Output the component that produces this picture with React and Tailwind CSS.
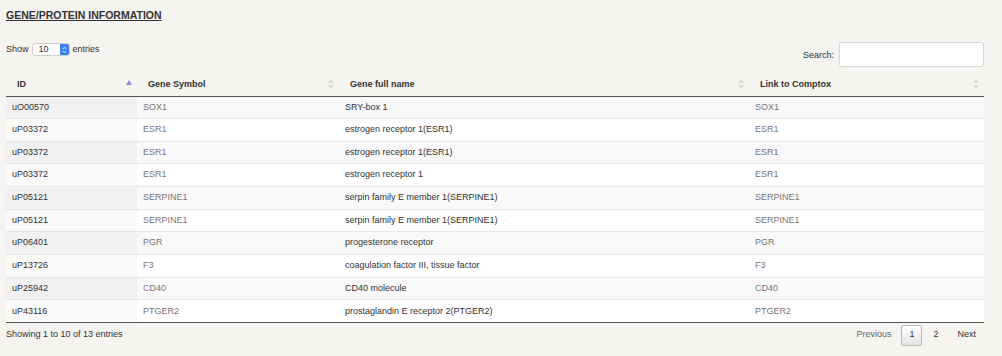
import React from 'react'

const rows = [
  ['uO00570', 'SOX1', 'SRY-box 1', 'SOX1'],
  ['uP03372', 'ESR1', 'estrogen receptor 1(ESR1)', 'ESR1'],
  ['uP03372', 'ESR1', 'estrogen receptor 1(ESR1)', 'ESR1'],
  ['uP03372', 'ESR1', 'estrogen receptor 1', 'ESR1'],
  ['uP05121', 'SERPINE1', 'serpin family E member 1(SERPINE1)', 'SERPINE1'],
  ['uP05121', 'SERPINE1', 'serpin family E member 1(SERPINE1)', 'SERPINE1'],
  ['uP06401', 'PGR', 'progesterone receptor', 'PGR'],
  ['uP13726', 'F3', 'coagulation factor III, tissue factor', 'F3'],
  ['uP25942', 'CD40', 'CD40 molecule', 'CD40'],
  ['uP43116', 'PTGER2', 'prostaglandin E receptor 2(PTGER2)', 'PTGER2'],
]

function SortIcon({ active }) {
  if (active) {
    return (
      <svg width="6" height="5" viewBox="0 0 6 5" className="shrink-0 mb-[4px]">
        <path d="M3 0 L6 5 L0 5 Z" fill="#8a8de0" />
      </svg>
    )
  }
  return (
    <svg width="6" height="10" viewBox="0 0 6 10" className="shrink-0">
      <path d="M3 0 L6 4 L0 4 Z" fill="#dcdcdc" />
      <path d="M3 10 L6 6 L0 6 Z" fill="#dcdcdc" />
    </svg>
  )
}

export default function App() {
  const cols = [
    { label: 'ID', w: 'w-[131px]', active: true },
    { label: 'Gene Symbol', w: 'w-[202px]' },
    { label: 'Gene full name', w: 'w-[410px]' },
    { label: 'Link to Comptox', w: 'w-[235px]' },
  ]

  return (
    <div className="min-h-[356px] w-[1002px] bg-[#f5f4f1] text-[#333] text-[9px]" style={{ fontFamily: '"Liberation Sans", Arial, sans-serif' }}>
      <div className="w-[978px] ml-[6px]">
        <h2 className="pt-[9px] text-[10.5px] font-bold underline text-[#333] leading-[13px]">GENE/PROTEIN INFORMATION</h2>

        <div className="flex justify-between mt-[13px] h-[32px]">
          <div className="flex items-start gap-[3px] pt-[8px]">
            <span className="leading-[12px]">Show</span>
            <div className="flex items-center h-[13px] w-[38px] bg-white border border-[#cfcfcf] rounded-[3px] overflow-hidden">
              <span className="flex-1 pl-[6px] leading-[11px]">10</span>
              <span className="w-[9px] h-full bg-[#3d82f5] flex items-center justify-center">
                <svg width="5" height="8" viewBox="0 0 5 8">
                  <path d="M0.8 3 L2.5 1.2 L4.2 3 M0.8 5 L2.5 6.8 L4.2 5" stroke="white" strokeWidth="0.9" fill="none" />
                </svg>
              </span>
            </div>
            <span className="leading-[12px]">entries</span>
          </div>
          <div className="flex items-start gap-[5px] pt-[7px]">
            <span className="mt-[7px] leading-[12px]">Search:</span>
            <div className="w-[145px] h-[25px] bg-white border border-[#d6d6d6] rounded-[3px]" />
          </div>
        </div>

        <table className="mt-[6px] border-collapse table-fixed w-[978px]">
          <thead>
            <tr className="h-[23px] border-b border-b-[#555]">
              {cols.map((c, i) => (
                <th key={i} className={`${c.w} font-bold text-left pl-[11px] pr-[5px]`}>
                  <div className="flex items-center justify-between">
                    <span>{c.label}</span>
                    <SortIcon active={c.active} />
                  </div>
                </th>
              ))}
            </tr>
          </thead>
          <tbody>
            {rows.map((r, i) => {
              const odd = i % 2 === 0
              return (
                <tr key={i} className={`h-[22.65px] ${i > 0 ? 'border-t border-t-[#e6e6e6]' : ''} ${odd ? 'bg-[#f9f9f9]' : 'bg-white'}`}>
                  <td className={`pl-[6px] ${odd ? 'bg-[#f1f1f1]' : 'bg-[#fafafa]'}`}>{r[0]}</td>
                  <td className="pl-[6px] text-[#777]">{r[1]}</td>
                  <td className="pl-[6px]">{r[2]}</td>
                  <td className="pl-[6px] text-[#777]">{r[3]}</td>
                </tr>
              )
            })}
          </tbody>
        </table>
        <div className="border-t border-t-[#555]" />

        <div className="flex justify-between items-center mt-0">
          <span>Showing 1 to 10 of 13 entries</span>
          <div className="flex items-center">
            <span className="px-[10px] py-[5px] text-[#666]">Previous</span>
            <span className="w-[21px] h-[21px] flex items-center justify-center border border-[#b8b8b8] rounded-[2px] bg-gradient-to-b from-white to-[#e5e5e5]">1</span>
            <span className="w-[27px] text-center">2</span>
            <span className="px-[8px] py-[5px]">Next</span>
          </div>
        </div>
      </div>
    </div>
  )
}
